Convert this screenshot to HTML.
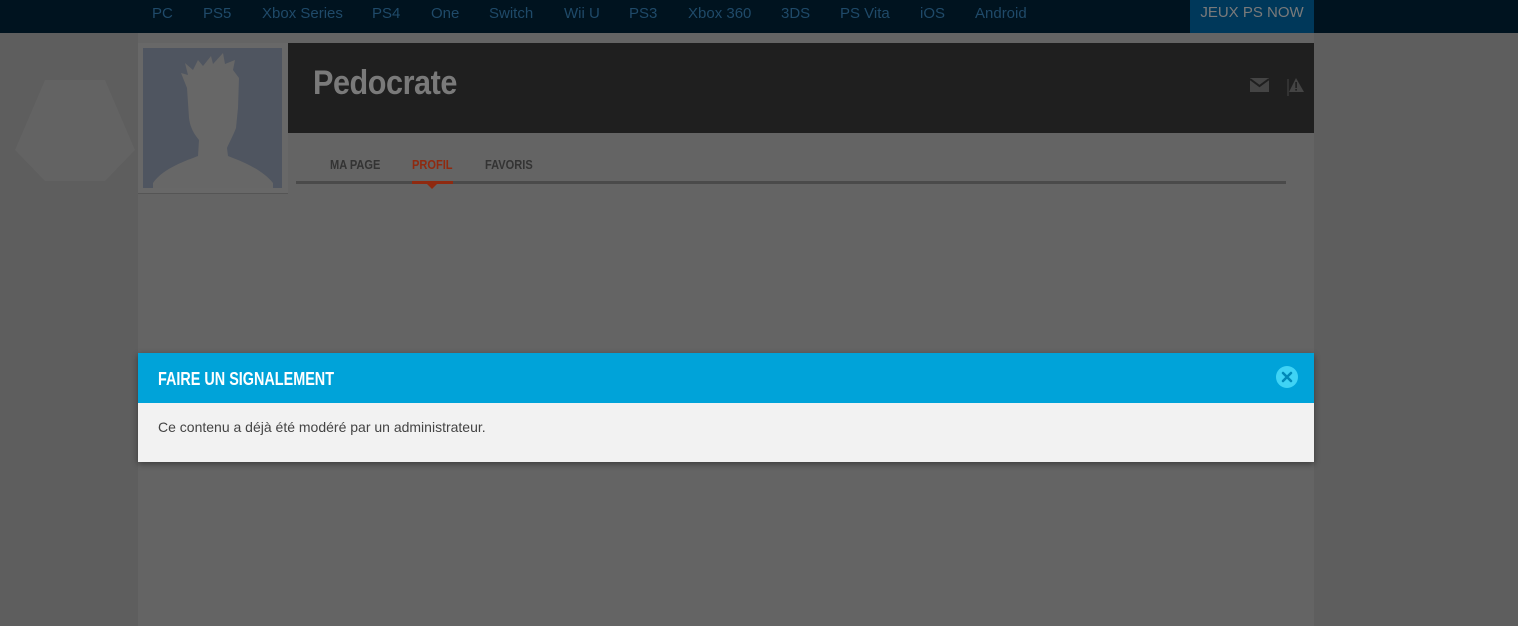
<!DOCTYPE html>
<html><head><meta charset="utf-8"><style>
*{margin:0;padding:0;box-sizing:border-box}
body{width:1518px;height:626px;overflow:hidden;background:#5e5e5e;font-family:"Liberation Sans",sans-serif;position:relative}
.nav{position:absolute;left:0;top:0;width:1518px;height:33px;background:#00131f}
.nav span{position:absolute;top:5px;font-size:15px;color:#1f4a69}
.ps{position:absolute;left:1190px;top:0;width:124px;height:33px;background:#00385a;color:#7a7a7a;font-size:15px;text-align:center;line-height:26px}
.panel{position:absolute;left:138px;top:33px;width:1176px;height:593px;background:#646464}
.avatar{position:absolute;left:138px;top:43px;width:150px;height:151px;background:#686868;border-bottom:1px solid #555}
.avatar .img{position:absolute;left:5px;top:5px;width:139px;height:140px;background:#4f5560;overflow:hidden}
.head{position:absolute;left:288px;top:43px;width:1026px;height:90px;background:#1f1f1f}
.cond{font-family:"Liberation Sans Narrow","Liberation Sans",sans-serif;font-weight:bold;transform-origin:0 0;white-space:nowrap}
.name{position:absolute;left:313px;top:64px;font-size:34px;color:#7a7a7a;letter-spacing:-0.5px;transform:scaleX(0.9)}
.tab{position:absolute;top:157px;font-size:13px;color:#333;transform:scaleX(0.85)}
.line{position:absolute;left:296px;top:181px;width:990px;height:3px;background:#4a4a4a}
.act{position:absolute;left:412px;top:181px;width:41px;height:3px;background:#8f2a10}
.tri{position:absolute;left:427px;top:184px;width:0;height:0;border-left:5px solid transparent;border-right:5px solid transparent;border-top:5px solid #8f2a10}
.modal{position:absolute;left:138px;top:353px;width:1176px;height:109px;box-shadow:0 2px 6px rgba(0,0,0,.4)}
.mh{height:50px;background:#00a3d9;position:relative}
.mh .t{position:absolute;left:20px;top:16px;color:#fff;font-size:18px;transform:scaleX(0.8)}
.mb{height:59px;background:#f2f2f2;padding:16px 20px;font-size:14px;color:#444}
.close{position:absolute;left:1138px;top:13px;width:22px;height:22px;border-radius:50%;background:#3fd3f5}
</style></head><body>
<div class="nav">
<span style="left:152px">PC</span><span style="left:203px">PS5</span><span style="left:262px">Xbox Series</span><span style="left:372px">PS4</span><span style="left:431px">One</span><span style="left:489px">Switch</span><span style="left:564px">Wii U</span><span style="left:629px">PS3</span><span style="left:688px">Xbox 360</span><span style="left:781px">3DS</span><span style="left:840px">PS Vita</span><span style="left:920px">iOS</span><span style="left:975px">Android</span>
<div class="ps">JEUX PS NOW</div>
</div>
<svg style="position:absolute;left:0;top:33px" width="138" height="593"><polygon points="45,47 105,47 135,117 105,148 45,148 15,117" fill="#636363"/></svg>
<div class="panel"></div>
<div class="avatar"><div class="img"><svg width="139" height="140"><path d="M10,135 C20,120 45,112 55,108 L56,92 C50,85 47,78 46,70 L44,40 L38,25 L45,27 L42,15 L50,22 L55,12 L60,18 L68,8 L70,16 L80,5 L82,16 L92,12 L90,22 L96,30 L95,60 L93,80 C90,88 86,95 84,100 L85,108 C95,112 118,120 130,135 L130,140 L10,140 Z" fill="#676767"/></svg></div></div>
<div class="head"></div>
<div class="name cond">Pedocrate</div>
<svg style="position:absolute;left:1250px;top:78px" width="19" height="15"><path d="M0,0H19V14H0Z" fill="#444"/><path d="M0,1L9.5,8L19,1" stroke="#1f1f1f" stroke-width="2" fill="none"/></svg>
<svg style="position:absolute;left:1287px;top:77px" width="18" height="19"><line x1="1" y1="2" x2="1" y2="19" stroke="#444" stroke-width="1"/><polygon points="9,1 17,15 2,15" fill="#444"/><rect x="8.3" y="5" width="1.6" height="6" fill="#1f1f1f"/><rect x="8.3" y="12" width="1.6" height="1.6" fill="#1f1f1f"/></svg>
<div class="tab cond" style="left:330px">MA PAGE</div>
<div class="tab cond" style="left:412px;color:#8f2a10">PROFIL</div>
<div class="tab cond" style="left:485px">FAVORIS</div>
<div class="line"></div><div class="act"></div><div class="tri"></div>
<div class="modal">
<div class="mh"><div class="t cond">FAIRE UN SIGNALEMENT</div>
<div class="close"><svg width="22" height="22"><path d="M7,7L15,15M15,7L7,15" stroke="#0089b8" stroke-width="2.5" stroke-linecap="round"/></svg></div></div>
<div class="mb">Ce contenu a déjà été modéré par un administrateur.</div>
</div>
</body></html>
